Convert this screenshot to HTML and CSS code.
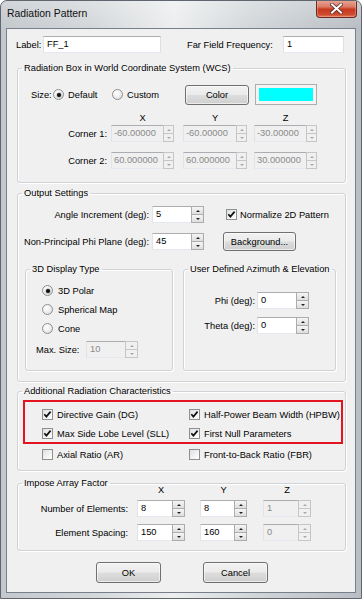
FILE: index.html
```html
<!DOCTYPE html>
<html>
<head>
<meta charset="utf-8">
<title>Radiation Pattern</title>
<link rel="stylesheet" href="styles.css">
</head>
<body>
<div class="window">
  <div class="titlebar">
    <span class="title">Radiation Pattern</span>
    <span class="close"><svg width="13" height="11" viewBox="0 0 13 11"><path d="M2 1.5 L11 9.5 M11 1.5 L2 9.5" stroke="#5a2a22" stroke-width="3.6" stroke-linecap="square" fill="none"/><path d="M2 1.5 L11 9.5 M11 1.5 L2 9.5" stroke="#fff" stroke-width="2" stroke-linecap="square" fill="none"/></svg></span>
  </div>
  <div class="frame">
    <div class="client">

      <div class="row row-label">
        <span class="lbl w-label">Label:</span>
        <span class="edit e-label">FF_1</span>
        <span class="lbl w-ff">Far Field Frequency:</span>
        <span class="edit e-ff">1</span>
      </div>

      <fieldset class="group g-box">
        <legend>Radiation Box in World Coordinate System (WCS)</legend>
        <div class="row size-row">
          <span class="lbl w-size">Size:</span>
          <span class="opt w-default"><span class="radio on"></span><span>Default</span></span>
          <span class="opt w-custom"><span class="radio"></span><span>Custom</span></span>
          <span class="btn b-color">Color</span>
          <span class="swatch"><span class="swatch-fill"></span></span>
        </div>
        <div class="row xyz-row c-row">
          <span class="c-lbl"></span>
          <span class="c1 hdr">X</span>
          <span class="c2 hdr">Y</span>
          <span class="c3 hdr">Z</span>
        </div>
        <div class="row corner-row c-row">
          <span class="lbl c-lbl">Corner 1:</span>
          <span class="spin dis small c1"><span class="val">-60.00000</span><span class="arrows"><i class="up"></i><i class="dn"></i></span></span>
          <span class="spin dis small c2"><span class="val">-60.00000</span><span class="arrows"><i class="up"></i><i class="dn"></i></span></span>
          <span class="spin dis small c3"><span class="val">-30.00000</span><span class="arrows"><i class="up"></i><i class="dn"></i></span></span>
        </div>
        <div class="row corner-row c-row second">
          <span class="lbl c-lbl">Corner 2:</span>
          <span class="spin dis small c1"><span class="val">60.000000</span><span class="arrows"><i class="up"></i><i class="dn"></i></span></span>
          <span class="spin dis small c2"><span class="val">60.000000</span><span class="arrows"><i class="up"></i><i class="dn"></i></span></span>
          <span class="spin dis small c3"><span class="val">30.000000</span><span class="arrows"><i class="up"></i><i class="dn"></i></span></span>
        </div>
      </fieldset>

      <fieldset class="group g-out">
        <legend>Output Settings</legend>
        <div class="row out-row first">
          <span class="lbl o-lbl">Angle Increment (deg):</span>
          <span class="spin o-spin"><span class="val">5</span><span class="arrows"><i class="up"></i><i class="dn"></i></span></span>
          <span class="opt o-check"><span class="cb on"><svg viewBox="0 0 11 11"><path d="M2.3 5.2 L4.4 7.6 L8.6 2.6" stroke="#111" stroke-width="1.7" fill="none"/></svg></span><span>Normalize 2D Pattern</span></span>
        </div>
        <div class="row out-row second">
          <span class="lbl o-lbl">Non-Principal Phi Plane (deg):</span>
          <span class="spin o-spin"><span class="val">45</span><span class="arrows"><i class="up"></i><i class="dn"></i></span></span>
          <span class="btn b-bg">Background...</span>
        </div>
        <div class="inner-groups">
          <fieldset class="group g-3d">
            <legend>3D Display Type</legend>
            <div class="row r-opt first"><span class="opt"><span class="radio on"></span><span>3D Polar</span></span></div>
            <div class="row r-opt"><span class="opt"><span class="radio"></span><span>Spherical Map</span></span></div>
            <div class="row r-opt"><span class="opt"><span class="radio"></span><span>Cone</span></span></div>
            <div class="row max-row">
              <span class="lbl m-lbl">Max. Size:</span>
              <span class="spin dis m-spin"><span class="val">10</span><span class="arrows"><i class="up"></i><i class="dn"></i></span></span>
            </div>
          </fieldset>
          <fieldset class="group g-user">
            <legend>User Defined Azimuth &amp; Elevation</legend>
            <div class="row u-row first">
              <span class="lbl u-lbl">Phi (deg):</span>
              <span class="spin u-spin"><span class="val">0</span><span class="arrows"><i class="up"></i><i class="dn"></i></span></span>
            </div>
            <div class="row u-row">
              <span class="lbl u-lbl">Theta (deg):</span>
              <span class="spin u-spin"><span class="val">0</span><span class="arrows"><i class="up"></i><i class="dn"></i></span></span>
            </div>
          </fieldset>
        </div>
      </fieldset>

      <fieldset class="group g-add">
        <legend>Additional Radiation Characteristics</legend>
        <div class="highlight">
          <div class="row ck-row first">
            <span class="opt ck1"><span class="cb on"><svg viewBox="0 0 11 11"><path d="M2.3 5.2 L4.4 7.6 L8.6 2.6" stroke="#111" stroke-width="1.7" fill="none"/></svg></span><span>Directive Gain (DG)</span></span>
            <span class="opt"><span class="cb on"><svg viewBox="0 0 11 11"><path d="M2.3 5.2 L4.4 7.6 L8.6 2.6" stroke="#111" stroke-width="1.7" fill="none"/></svg></span><span>Half-Power Beam Width (HPBW)</span></span>
          </div>
          <div class="row ck-row">
            <span class="opt ck1"><span class="cb on"><svg viewBox="0 0 11 11"><path d="M2.3 5.2 L4.4 7.6 L8.6 2.6" stroke="#111" stroke-width="1.7" fill="none"/></svg></span><span>Max Side Lobe Level (SLL)</span></span>
            <span class="opt"><span class="cb on"><svg viewBox="0 0 11 11"><path d="M2.3 5.2 L4.4 7.6 L8.6 2.6" stroke="#111" stroke-width="1.7" fill="none"/></svg></span><span>First Null Parameters</span></span>
          </div>
        </div>
        <div class="row ck-row plain">
          <span class="opt ck1"><span class="cb"></span><span>Axial Ratio (AR)</span></span>
          <span class="opt"><span class="cb"></span><span>Front-to-Back Ratio (FBR)</span></span>
        </div>
      </fieldset>

      <fieldset class="group g-arr">
        <legend>Impose Array Factor</legend>
        <div class="row a-row a-hdr">
          <span class="a-lbl"></span>
          <span class="a1 hdr">X</span>
          <span class="a2 hdr">Y</span>
          <span class="a3 hdr">Z</span>
        </div>
        <div class="row a-row first">
          <span class="lbl a-lbl">Number of Elements:</span>
          <span class="spin a1"><span class="val">8</span><span class="arrows"><i class="up"></i><i class="dn"></i></span></span>
          <span class="spin a2"><span class="val">8</span><span class="arrows"><i class="up"></i><i class="dn"></i></span></span>
          <span class="spin dis a3"><span class="val">1</span><span class="arrows"><i class="up"></i><i class="dn"></i></span></span>
        </div>
        <div class="row a-row second">
          <span class="lbl a-lbl">Element Spacing:</span>
          <span class="spin a1"><span class="val">150</span><span class="arrows"><i class="up"></i><i class="dn"></i></span></span>
          <span class="spin a2"><span class="val">160</span><span class="arrows"><i class="up"></i><i class="dn"></i></span></span>
          <span class="spin dis a3"><span class="val">0</span><span class="arrows"><i class="up"></i><i class="dn"></i></span></span>
        </div>
      </fieldset>

      <div class="row btn-row">
        <span class="btn b-ok">OK</span>
        <span class="btn b-cancel">Cancel</span>
      </div>

    </div>
  </div>
</div>
</body>
</html>
```

FILE: styles.css
```css
html, body {
  margin: 0;
  padding: 0;
  background: #ffffff;
}

body {
  font-family: "Liberation Sans", Arial, sans-serif;
  font-size: 9.3px;
  color: #000;
}

.window {
  width: 362px;
  height: 599px;
  box-sizing: border-box;
  border: 1px solid #5f666e;
  border-radius: 7px 7px 0 0;
  background: linear-gradient(to right, #c3c8cd 0%, #d4d7da 25%, #eceeef 48%, #d2d6d9 70%, #b8bec4 100%);
  display: flex;
  flex-direction: column;
  overflow: hidden;
}

.titlebar {
  height: 27px;
  flex: none;
  display: flex;
  justify-content: space-between;
  align-items: flex-start;
  padding: 0 4px 0 6px;
  background: linear-gradient(to bottom, rgba(255,255,255,0.25), rgba(255,255,255,0));
}

.title {
  font-size: 10.4px;
  line-height: 12px;
  margin-top: 7px;
  color: #111;
}

.close {
  margin-top: -1px;
  width: 41px;
  height: 18px;
  box-sizing: border-box;
  border: 1px solid #6e2a20;
  border-top: none;
  border-radius: 0 0 4px 4px;
  background: linear-gradient(to bottom, #e9a99b 0%, #dc7a66 40%, #c6391f 55%, #cf4a2f 85%, #e07a5a 100%);
  display: flex;
  align-items: center;
  justify-content: center;
  box-shadow: inset 0 0 0 1px rgba(255,200,190,0.35);
}

.close svg { display: block; }

.frame {
  flex: 1;
  display: flex;
  padding: 0 5px 5px 5px;
}

.client {
  flex: 1;
  border: 1px solid #77808a;
  background: #f0f0f0;
  display: flex;
  flex-direction: column;
}

.row {
  display: flex;
  align-items: center;
  flex: none;
}

.lbl { white-space: nowrap; }

/* edits */
.edit {
  box-sizing: border-box;
  height: 17px;
  line-height: 15px;
  padding-left: 3px;
  background: #fff;
  border: 1px solid;
  border-color: #abadb3 #dbdfe6 #e3e9ef #e2e3ea;
}

.spin {
  box-sizing: border-box;
  height: 17px;
  display: flex;
  background: #fff;
  border: 1px solid;
  border-color: #abadb3 #dbdfe6 #e3e9ef #e2e3ea;
}

.spin .val {
  flex: 1;
  min-width: 0;
  overflow: hidden;
  white-space: nowrap;
  padding-left: 3px;
  line-height: 15px;
}

.spin .arrows {
  width: 13px;
  flex: none;
  display: flex;
  flex-direction: column;
  margin: -1px -1px -1px 0;
}

.spin .arrows i {
  flex: 1;
  box-sizing: border-box;
  border: 1px solid #acacac;
  background: linear-gradient(to bottom, #f5f5f5, #dedede);
  display: flex;
  align-items: center;
  justify-content: center;
}

.spin .arrows i + i { border-top: none; }

.spin .arrows i::after {
  content: "";
  width: 0;
  height: 0;
  border-left: 2px solid transparent;
  border-right: 2px solid transparent;
}

.spin .arrows .up::after { border-bottom: 2px solid #222; }
.spin .arrows .dn::after { border-top: 2px solid #222; }

.spin.dis { background: #f0f0f0; color: #8a8a8a; }
.spin.dis .arrows i { background: #f0f0f0; border-color: #c6c6c6; }
.spin.dis .arrows .up::after { border-bottom-color: #a8a8a8; }
.spin.dis .arrows .dn::after { border-top-color: #a8a8a8; }

.spin.small .arrows { width: 11px; }
.spin.small .val { padding-left: 2px; }

/* buttons */
.btn {
  box-sizing: border-box;
  display: flex;
  align-items: center;
  justify-content: center;
  border: 1px solid #707070;
  border-radius: 3px;
  background: linear-gradient(to bottom, #f2f2f2 0%, #ebebeb 48%, #dddddd 52%, #cfcfcf 100%);
  box-shadow: inset 0 0 0 1px rgba(255,255,255,0.6);
}

/* options */
.opt {
  display: flex;
  align-items: center;
  white-space: nowrap;
}

.radio {
  width: 11px;
  height: 11px;
  box-sizing: border-box;
  border: 1px solid #8e8f8f;
  border-radius: 50%;
  background: radial-gradient(circle at 40% 35%, #ffffff 0%, #eeeeee 50%, #cfd2d6 100%);
  margin-right: 4px;
  display: flex;
  align-items: center;
  justify-content: center;
  flex: none;
}

.radio.on::after {
  content: "";
  width: 4px;
  height: 4px;
  border-radius: 50%;
  background: #111;
  box-shadow: 0 0 1px 0.5px rgba(0,0,0,0.35);
}

.cb {
  width: 11px;
  height: 11px;
  box-sizing: border-box;
  border: 1px solid #8e8f8f;
  background: linear-gradient(135deg, #dcdfe3 0%, #f7f7f7 70%, #ffffff 100%);
  margin-right: 4px;
  flex: none;
  position: relative;
}

.cb svg {
  display: block;
  width: 11px;
  height: 11px;
  margin: -1px;
}

/* groups */
.group {
  margin: 0;
  padding: 0;
  min-width: 0;
  border: 1px solid #cfd3d7;
  border-radius: 3px;
  box-shadow: inset 1px 1px 0 #ffffff, 1px 1px 0 #ffffff;
  display: flex;
  flex-direction: column;
}

.group legend {
  padding: 0 2px;
  margin-left: 4px;
  line-height: 12px;
  font-size: 9.3px;
  white-space: nowrap;
}

/* label row */
.row-label {
  margin-top: 7px;
  height: 17px;
  padding-left: 9px;
}
.w-label { width: 27px; }
.e-label { width: 118px; }
.w-ff { width: 96px; margin-left: 26px; }
.e-ff { width: 61px; }

/* radiation box */
.g-box {
  margin: 9px 9px 0 10px;
  padding-bottom: 13px;
}
.size-row {
  margin-top: 10px;
  height: 21px;
  padding-left: 13px;
}
.w-size { width: 22px; }
.w-default { width: 59px; }
.w-custom { width: 73px; }
.b-color { width: 64px; height: 20px; }
.swatch {
  width: 62px;
  height: 21px;
  box-sizing: border-box;
  margin-left: 6px;
  border: 1px solid #adadad;
  background: #f4f4f4;
  padding: 3px 3px;
  display: flex;
}
.swatch-fill { flex: 1; background: #00ffff; }

.c-row .c-lbl { width: 89px; text-align: right; flex: none; }
.c-row .c1 { width: 63px; margin-left: 4px; }
.c-row .c2 { width: 64px; margin-left: 9px; }
.c-row .c3 { width: 63px; margin-left: 7px; }
.hdr { text-align: center; }
.xyz-row { margin-top: 7px; height: 12px; }
.corner-row { margin-top: 1px; height: 17px; }
.corner-row.second { margin-top: 10px; }

/* output */
.g-out {
  margin: 4px 9px 0 10px;
  padding-bottom: 10px;
}
.out-row { height: 17px; }
.out-row.first { margin-top: 7px; }
.out-row.second { margin-top: 10px; }
.o-lbl { width: 131px; text-align: right; flex: none; }
.o-spin { width: 52px; margin-left: 3px; }
.o-check { margin-left: 22px; }
.o-check .cb { margin-right: 3px; }
.b-bg { width: 73px; height: 19px; margin-left: 19px; }

.inner-groups {
  display: flex;
  margin-top: 13px;
  padding-left: 7px;
  gap: 10px;
}
.g-3d { width: 148px; height: 108px; box-sizing: border-box; }
.g-user { width: 153px; height: 108px; box-sizing: border-box; }

.r-opt { height: 13px; margin-top: 6px; padding-left: 16px; }
.r-opt.first { margin-top: 9px; }
.r-opt .radio { margin-right: 5px; }
.max-row { height: 17px; margin-top: 6px; padding-left: 10px; }
.m-lbl { width: 50px; }
.m-spin { width: 52px; }

.u-row { height: 17px; margin-top: 8px; }
.u-row.first { margin-top: 17px; }
.u-lbl { width: 71px; text-align: right; flex: none; }
.u-spin { width: 52px; margin-left: 2px; }

/* additional */
.g-add {
  margin: 3px 9px 0 10px;
  padding-bottom: 9px;
}
.highlight {
  margin: 3px 0 0 5px;
  width: 320px;
  height: 44px;
  box-sizing: border-box;
  border: 2px solid #e3141f;
  padding-left: 17px;
  display: flex;
  flex-direction: column;
}
.ck-row { height: 13px; margin-top: 6px; }
.ck-row.first { margin-top: 6px; }
.ck-row .ck1 { width: 147px; }
.ck-row.plain { margin-top: 4px; padding-left: 24px; }

/* array */
.g-arr {
  margin: 6px 9px 0 10px;
  padding-bottom: 9px;
}
.a-row .a-lbl { width: 110px; text-align: right; flex: none; }
.a-row .a1 { width: 48px; margin-left: 9px; }
.a-row .a2 { width: 47px; margin-left: 15px; }
.a-row .a3 { width: 48px; margin-left: 16px; }
.a-hdr { margin-top: -5px; height: 12px; }
.a-row.first { margin-top: 4px; height: 17px; }
.a-row.second { margin-top: 7px; height: 17px; }

/* buttons */
.btn-row {
  margin-top: 11px;
  padding-left: 89px;
}
.b-ok { width: 65px; height: 21px; }
.b-cancel { width: 65px; height: 21px; margin-left: 42px; }
```
